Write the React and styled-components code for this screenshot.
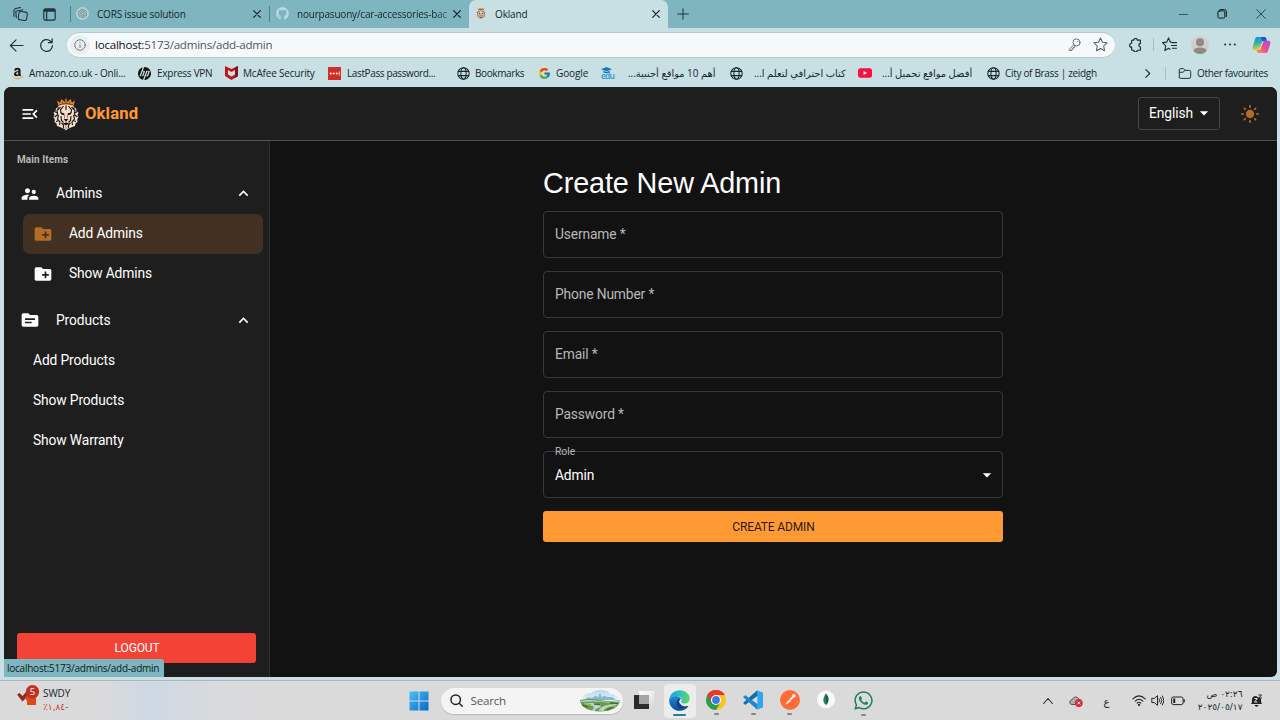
import React from 'react';
import styled, { createGlobalStyle } from 'styled-components';
import {
  MdMenuOpen, MdSupervisorAccount, MdCreateNewFolder, MdSource,
  MdKeyboardArrowUp, MdArrowDropDown, MdLightMode,
} from 'react-icons/md';
import { FaAmazon, FaGithub, FaWhatsapp } from 'react-icons/fa';
import { FcGoogle } from 'react-icons/fc';
import { SiOpenai, SiHp } from 'react-icons/si';

const Global = createGlobalStyle`
  * { box-sizing: border-box; }
  body { margin: 0; background: #c8dfe3; overflow: hidden; }
  svg { display: block; flex: none; }
`;

const ui = '"Open Sans", "DejaVu Sans", sans-serif';
const roboto = 'Roboto, sans-serif';

const Screen = styled.div`
  width: 1280px; height: 720px; display: flex; flex-direction: column;
  background: #c8dfe3; font-family: ${ui}; color: #15262b; overflow: hidden;
`;

/* ---------- browser chrome ---------- */
const TabBar = styled.div`
  height: 28px; flex: none; display: flex; align-items: stretch; background: #7eb5be; padding-left: 13px;
`;
const TabTools = styled.div`
  width: 57px; display: flex; align-items: center; gap: 15px;
`;
const Divider = styled.i`
  width: 1px; height: ${(p) => p.$h || 16}px; background: ${(p) => p.$c || '#4f7f88'}; align-self: center; flex: none;
`;
const Tab = styled.div`
  width: ${(p) => p.$w}px; display: flex; align-items: center; padding: 0 8px 1px ${(p) => p.$pl || 6}px;
  background: ${(p) => (p.$active ? '#c8dfe3' : 'transparent')};
  border-radius: 7px 7px 0 0;
`;
const TabTitle = styled.span`
  flex: 1; margin-left: 8px; font-size: 10px; line-height: 14px; white-space: nowrap;
  letter-spacing: ${(p) => p.$ls || 0}px;
  ${(p) => p.$fade && 'mask-image: linear-gradient(90deg, #000 88%, rgba(0,0,0,.3));'}
`;
const NewTab = styled.div` display: flex; align-items: center; padding: 0 0 1px 9px; flex: 1; `;
const WindowButtons = styled.div`
  display: flex; align-items: center; gap: 29px; padding-right: 14px;
`;
const Toolbar = styled.div`
  height: 34px; flex: none; display: flex; align-items: center; padding-left: 9px;
`;
const NavButtons = styled.div` width: 58px; display: flex; gap: 15px; `;
const AddressBar = styled.div`
  width: 1048px; height: 26px; border-radius: 13px; background: #f5f9fb; border: 1px solid #b5c8cc;
  border-width: 1px 0; display: flex; align-items: center; padding: 0 7px 1px 3px;
`;
const InfoDisc = styled.span`
  width: 20px; height: 20px; border-radius: 50%; background: #e9eef0; display: grid; place-items: center; margin-right: 5px;
`;
const Url = styled.span`
  flex: 1; font-size: 11.6px; letter-spacing: -0.25px; color: #50585b; white-space: nowrap;
  b { font-weight: 400; color: #111; }
`;
const AddressIcons = styled.div` display: flex; gap: 12px; align-items: center; `;
const ToolIcons = styled.div`
  flex: 1; display: flex; align-items: center; padding: 0 0 1px 14px;
`;
const Slot = styled.span` width: ${(p) => p.$w}px; display: flex; align-items: center; `;
const BookmarkBar = styled.div`
  height: 25px; flex: none; display: flex; align-items: center; padding: 0 0 3px 11px;
`;
const Bookmark = styled.div`
  width: ${(p) => p.$w}px; display: flex; align-items: center; flex: none;
`;
const BookmarkIcon = styled.span` width: ${(p) => p.$w || 18}px; flex: none; `;
const BookmarkText = styled.span`
  font-size: ${(p) => p.$fs || 10}px; line-height: 14px; white-space: nowrap; letter-spacing: ${(p) => p.$ls || 0}px;
`;

/* ---------- application ---------- */
const AppFrame = styled.div`
  height: 590px; flex: none; margin: 0 3px 0 4px; border-radius: 7px 7px 6px 0; overflow: hidden;
  display: flex; flex-direction: column; background: #121212; color: #fff; font-family: ${roboto};
  position: relative;
`;
const AppHeader = styled.header`
  height: 54px; flex: none; background: #1e1e1e; border-bottom: 1px solid #515151;
  display: flex; align-items: center; padding: 0 17px 0 16px;
`;
const Brand = styled.div`
  flex: 1; margin-left: 13px; display: flex; align-items: center; gap: 6px;
  color: #ff9933; font-size: 16.67px; font-weight: 700; letter-spacing: 0.12px;
`;
const LanguageSelect = styled.div`
  width: 82px; height: 33px; border: 1px solid #464646; border-radius: 3px; margin-right: 20px;
  display: flex; align-items: center; padding: 0 0 1px 10px; font-size: 13.8px; letter-spacing: -0.07px; gap: 1px;
`;
const AppBody = styled.div` flex: 1; display: flex; min-height: 0; `;
const Sidebar = styled.aside`
  width: 266px; background: #1e1e1e; border-right: 1px solid #333; display: flex; flex-direction: column;
`;
const Subheader = styled.div`
  height: 32.5px; padding: 12px 0 0 13px; font-size: 10px; line-height: 14px; font-weight: 700; color: #b8b8b8;
  letter-spacing: 0.08px;
`;
const SideRow = styled.div`
  height: 40px; display: flex; align-items: center; font-size: 13.8px; letter-spacing: -0.12px; line-height: 20px;
  padding-left: ${(p) => p.$pl}px; padding-right: 16px;
  margin: 0 ${(p) => (p.$nested ? 6 : 0)}px 0 ${(p) => (p.$nested ? 19.4 : 0)}px;
  border-radius: ${(p) => (p.$nested ? 7 : 0)}px;
  background: ${(p) => (p.$active ? '#423122' : 'transparent')};
  > svg:first-child { color: ${(p) => (p.$active ? '#b46d25' : '#fff')}; }
`;
const RowText = styled.span` flex: 1; margin-left: ${(p) => p.$ml || 0}px; padding-bottom: 1px; `;
const RowGap = styled.div` height: 6.7px; `;
const LogoutButton = styled.button`
  margin: auto 13px 14px; height: 30px; border: 0; border-radius: 3px; background: #f44336; color: #fff;
  font: 400 12px ${roboto}; letter-spacing: -0.15px; padding: 0 0 0 1px;
`;
const Main = styled.main` flex: 1; display: flex; justify-content: center; padding: 25px 1px 0 0; `;
const Form = styled.form` width: 460px; display: flex; flex-direction: column; gap: 13px; `;
const Title = styled.h4`
  margin: 0 0 -3px; height: 35px; font: 400 28.8px/35px "Liberation Sans", sans-serif; letter-spacing: -0.12px;
`;
const Field = styled.div`
  position: relative; height: 47px; border: 1px solid #383838; border-radius: 4px; padding: 0 5px 0 11px;
  display: flex; align-items: center; justify-content: space-between;
  font-size: 13.8px; letter-spacing: -0.14px; color: ${(p) => (p.$filled ? '#fff' : '#b8b8b8')};
`;
const FieldText = styled.span` padding-bottom: ${(p) => (p.$value ? 0 : 1)}px; line-height: 16px; `;
const FloatingLabel = styled.span`
  position: absolute; left: 11px; top: -7px; font-size: 10.3px; line-height: 14px; color: #b8b8b8; letter-spacing: 0;
`;
const SubmitButton = styled.button`
  height: 31px; border: 0; border-radius: 3px; background: #ff9933; color: rgba(0,0,0,.87);
  font: 400 12px ${roboto}; letter-spacing: -0.15px; padding: 0 0 0 1px;
`;
const StatusBubble = styled.div`
  position: absolute; left: -1px; bottom: 0; width: 161px; height: 18px; background: #7eb5be; color: #0d1a1d;
  border-radius: 0 3px 0 0; font: 10px/18px ${ui}; padding-left: 4px; letter-spacing: -0.24px; white-space: nowrap;
`;

/* ---------- taskbar ---------- */
const Taskbar = styled.footer`
  flex: 1; margin-top: 3px; border-top: 1px solid #aeb7bf; display: flex;
  background: linear-gradient(90deg, #dadadb 0, #dadadb 100px, #ced9e4 150px, #d8dadd 215px, #dadadb 260px);
`;
const Widget = styled.div`
  width: 408px; padding: 4px 0 0 16px; display: flex; gap: 2px;
`;
const WidgetText = styled.div`
  font-size: 10px; line-height: 15px; letter-spacing: -0.1px; padding-top: 1px;
  small { display: block; font: 9px/12px "DejaVu Sans", sans-serif; color: #c23a2c; direction: ltr; unicode-bidi: bidi-override; letter-spacing: -0.8px; }
`;
const Dock = styled.div` width: 480px; display: flex; align-items: center; padding-left: 0.5px; `;
const SearchBox = styled.div`
  width: 182px; height: 26px; border-radius: 13px; background: #f4f4f4; margin: 0 9px 0 12px;
  display: flex; align-items: center; padding: 0 3px 0 9px; box-shadow: 0 1px 1px #bbb;
  span { flex: 1; font-size: 11.6px; color: #585858; margin-left: 8px; letter-spacing: -0.2px; }
`;
const DockItem = styled.div`
  width: ${(p) => (p.$active ? 32 : 24)}px; height: 34px; margin-right: ${(p) => p.$mr || 0}px; border-radius: 4px;
  background: ${(p) => (p.$active ? '#ececec' : 'transparent')};
  display: flex; flex-direction: column; align-items: center; padding-top: 6px;
`;
const Running = styled.i`
  margin-top: 3px; width: ${(p) => (p.$active ? 13 : 5)}px; height: 2px; border-radius: 1px;
  background: ${(p) => (p.$active ? '#23808e' : '#858585')};
`;
const Tray = styled.div` flex: 1; display: flex; align-items: center; padding-left: 154.5px; `;
const Lang = styled.span` width: 28px; font: 10px "DejaVu Sans", sans-serif; padding-top: 1px; `;
const Clock = styled.div`
  width: 48px; margin-right: 7px; text-align: right; font: 9px/13px "DejaVu Sans", sans-serif; letter-spacing: -0.6px; white-space: nowrap;
  div { direction: rtl; text-align: right; }
  div + div { direction: ltr; unicode-bidi: bidi-override; }
`;

/* ---------- drawings ---------- */
const Line = ({ w = 16, h, box = '0 0 16 16', sw = 1, c = '#1c3036', children }) => (
  <svg width={w} height={h || w} viewBox={box} fill="none" stroke={c} strokeWidth={sw} strokeLinecap="round" strokeLinejoin="round">{children}</svg>
);
const Close = () => <Line w={8} box="0 0 8 8" sw={1.2} c="#142125"><path d="M.7.7l6.600 6.600M7.300.7L.7 7.300" /></Line>;
const Globe = () => (
  <Line w={13} sw={1.3} c="#17272b">
    <circle cx="8" cy="8" r="7" /><ellipse cx="8" cy="8" rx="3.200" ry="7" /><path d="M1.600 5.400h12.800M1.600 10.600h12.800" />
  </Line>
);
const Amazon = () => (
  <svg width="13" height="13" viewBox="0 0 512 512">
    <defs>
      <clipPath id="amzLetter"><path d="M0 0h512v365H0z" /></clipPath>
      <clipPath id="amzSmile"><path d="M0 365h512v147H0z" /></clipPath>
    </defs>
    <g clipPath="url(#amzLetter)"><FaAmazon size={512} color="#16130e" /></g>
    <g clipPath="url(#amzSmile)"><FaAmazon size={512} color="#f0962a" /></g>
  </svg>
);
const McAfee = () => (
  <svg width="13" height="14" viewBox="0 0 13 14"><path d="M0 0l6.500 3L13 0v10l-6.500 4L0 10z" fill="#c01818" /><path d="M3 4l3.500 2L10 4v4.600L6.500 10.500 3 8.600z" fill="#c8dfe3" /><path d="M10 1.400L13 0v10l-3 1.900z" fill="#7f1518" /></svg>
);
const LastPass = () => (
  <svg width="13" height="13" viewBox="0 0 13 13"><path d="M0 0h13v13H0z" fill="#d32d27" /><g fill="#fff"><circle cx="2.700" cy="6.500" r="1" /><circle cx="5.700" cy="6.500" r="1" /><circle cx="8.700" cy="6.500" r="1" /><path d="M10.800 4.500h.8v4h-.8z" /></g></svg>
);
const Edu = () => (
  <svg width="15" height="13" viewBox="0 0 15 13"><path d="M0 2.200L5.500 0 11 2.200 5.500 4.300zM2.300 3.700v1.700q3.200 1.500 6.400 0V3.700L5.500 5z" fill="#1678bf" /><text x="0" y="12.300" fontSize="8.500" fontFamily="Open Sans, sans-serif" fontWeight="600" fill="#2b94d1" textLength="14">edu</text></svg>
);
const YouTube = () => (
  <svg width="14" height="10" viewBox="0 0 14 10"><rect width="14" height="9.500" y=".2" rx="2.500" fill="#f4123f" /><path d="M5.500 2.900l3.500 2-3.500 2z" fill="#fff" /></svg>
);
const Copilot = () => (
  <svg width="19" height="18" viewBox="0 0 19 18">
    <defs>
      <linearGradient id="cpa" x1="0" y1="0" x2="0.300" y2="1"><stop offset="0" stopColor="#1c8df0" /><stop offset=".5" stopColor="#27b3a6" /><stop offset="1" stopColor="#f2cf2c" /></linearGradient>
      <linearGradient id="cpb" x1="1" y1="0" x2="0" y2="1"><stop offset="0" stopColor="#a44be8" /><stop offset=".5" stopColor="#ea4c92" /><stop offset="1" stopColor="#fc9a4b" /></linearGradient>
    </defs>
    <path d="M5.500 1h6.800c1 0 1.500.5 1.800 1.500l.7 2.300h-3c-1 0-1.600.5-1.900 1.500L8 12c-.4 1.400-1 2-2.300 2H2.500C.8 14 .2 12.600.8 10.700L3 3c.4-1.400 1.200-2 2.500-2z" fill="url(#cpa)" />
    <path d="M13.500 17H6.700c-1 0-1.500-.5-1.800-1.500l-.5-1.600H7c1 0 1.700-.6 2-1.600L10.900 6.500c.4-1.300 1-1.800 2.300-1.800h3.300c1.700 0 2.300 1.300 1.700 3.200L16 15c-.4 1.400-1.200 2-2.500 2z" fill="url(#cpb)" />
    <path d="M9 1h3.300c1 0 1.500.5 1.800 1.500l.7 2.300h-3c-.6 0-1.100.2-1.400.6z" fill="#2351c8" />
  </svg>
);
const Lion = ({ w = 26, h = 34 }) => (
  <svg width={w} height={h} viewBox="0 0 26 34">
    <path d="M4 3.500l3 2.200L8.500 2l3 3L13 .8l1.500 4.200 3-3L19 5.700l3-2.200-1.700 6H5.700z" fill="#e8862a" />
    <path d="M6.200 7.600q6.800-2 13.600 0M9 4.800l1 1.800M17 4.800l-1 1.800M13 3.500v2.500" fill="none" stroke="#4a2c12" strokeWidth=".8" />
    <path d="M3 11.500L6 9l4-1.200h6L20 9l3 2.500.5 2.500 2 1.500-1 2.500 1 2-1.300 2.500.3 2.500-2 1.500-.5 2.500-2.500.8L17 31l-2 .5-2 2-2-2-2-.5-2.500-1.200L4 29l-.5-2.500L1.500 25l.3-2.500L.5 20l1-2-1-2.500 2-1.500z" fill="#f6dfcb" />
    <g fill="none" stroke="#1e1a18" strokeWidth="1.150">
      <path d="M7.500 10l-3.500 3.500.7 4-3 2.500M5.500 18l-1 4 2.500 3-.5 3M18.500 10l3.500 3.500-.7 4 3 2.500M20.500 18l1 4-2.500 3 .5 3M10.500 9l-3 4 .5 3M15.500 9l3 4-.5 3M13 8.500V13" />
      <path d="M1.500 14.500l3 1.500M24.500 14.500l-3 1.500M3 24.500l3-1M23 24.500l-3-1M8 19l.5 4.500 2 2M18 19l-.5 4.500-2 2M8.500 26l2 2v3M17.500 26l-2 2v3M6 12L4.500 10.500M20 12l1.500-1.500" />
    </g>
    <path d="M7.500 15.300l4 1.300-.6 1.600-2.900-.9zM18.500 15.300l-4 1.300.6 1.600 2.900-.9zM10.600 22h4.800L13 24.700zM9.800 26.600l3.200-1.100 3.200 1.100-3.200 1.800z" fill="#161312" />
    <path d="M11.600 17.500v4M14.400 17.500v4M13 24.500v1.500M13 29v3" stroke="#70584a" strokeWidth=".7" />
  </svg>
);
const Windows = () => (
  <svg width="20" height="20" viewBox="0 0 20 20"><defs><linearGradient id="win" x1="0" y1="0" x2="1" y2="1"><stop offset="0" stopColor="#4cc0f5" /><stop offset="1" stopColor="#0669c7" /></linearGradient></defs><path d="M.5.500h9v9h-9zM10.500.5h9v9h-9zM.5 10.500h9v9h-9zM10.500 10.500h9v9h-9z" fill="url(#win)" /></svg>
);
const SearchArt = () => (
  <svg width="40" height="22" viewBox="0 0 40 22">
    <defs>
      <linearGradient id="sky" x1="0" y1="0" x2="0" y2="1"><stop offset="0" stopColor="#b7d7ee" /><stop offset="1" stopColor="#e6f1f2" /></linearGradient>
      <clipPath id="land"><path d="M0 10q10-2 20 0t20 0c0 7-9 11.500-20 11.500S0 17 0 10z" /></clipPath>
    </defs>
    <path d="M1 10C2 6 6 3 11 3c2-2 5-3 9-3 6 0 8 1 10 4 5 0 8 3 9 6z" fill="url(#sky)" />
    <path d="M4 10l4-3 4 1 3-2 4 1V4h2v3l3-1 4 1 4 0 4 3z" fill="#86b9cf" />
    <g clipPath="url(#land)">
      <path d="M0 8h40v14H0z" fill="#6f9c45" />
      <path d="M0 11q9-2 20 0t20-1v2q-10 1-17 0T0 12z" fill="#a9d2df" />
      <path d="M3 14q6-1 9 1t1 4l-2 3h4q-1-3 3-4t2-3-8-2-9 1zM24 22q-1-3 4-4.500t10-3q-2-1-8 0t-9 3-1 4.500z" fill="#b4d6dc" />
      <path d="M2 15l6 2M27 20l7-4M14 14l6 .5M30 13l8 .5" stroke="#466f2a" strokeWidth="1.500" />
      <path d="M4 13.500l9 2.500M27 17l9-1M19 20h3" stroke="#a9c552" strokeWidth="1" />
    </g>
  </svg>
);
const TaskView = () => (
  <svg width="20" height="20" viewBox="0 0 20 20"><defs><linearGradient id="tv" x1="0" y1="0" x2="1" y2="1"><stop offset="0" stopColor="#fff" /><stop offset="1" stopColor="#dedede" /></linearGradient></defs><path d="M5 1h15v13H5z" fill="url(#tv)" /><path d="M0 5h5v9h10v5H0z" fill="#2a2a2a" /><path d="M5 5h10v9H5z" fill="#a5a5a5" /></svg>
);
const Edge = () => (
  <svg width="21" height="21" viewBox="0 0 21 21">
    <defs>
      <linearGradient id="ea" x1="0" y1="0" x2="1" y2="0"><stop offset="0" stopColor="#209fe0" /><stop offset=".55" stopColor="#2fc3bd" /><stop offset="1" stopColor="#68d850" /></linearGradient>
      <linearGradient id="eb" x1="0" y1="0" x2="0" y2="1"><stop offset="0" stopColor="#1a8edc" /><stop offset="1" stopColor="#0e4796" /></linearGradient>
    </defs>
    <path d="M.3 9.500C1 4 5.300.3 10.700.3 16.500.3 20.700 4 20.700 8.500c0 3.300-2.500 5.200-5.400 5.200-2.400 0-3.500-.8-3-1.800 1.800-2.600-.2-6-4.600-6C4 5.900 1.300 7.200.3 9.500z" fill="url(#ea)" />
    <path d="M.3 9.500c1.500-3.500 9-5 11.600-1.200-4 .2-5.400 4.200-3.600 7.300 2.200 3.500 7 4.400 10.800 1.200-2 2.800-5 4-8.300 4C4.200 20.800-.4 15.500.3 9.500z" fill="url(#eb)" />
    <path d="M11.900 8.300c-4 .2-5.800 4.200-4 7.300 2.500 4.200 7.300 4.500 11.200 1.200.6-.8-.2-1-1-.7-3.600 1.200-7.300-1-6.500-3.300.9-1.500 1.500-2.700.3-4.500z" fill="#123f83" />
    <path d="M12.200 8.800c1 1.300.5 2.300 0 3.200-.6 1.300 1.600 2 4 1.600-2 1.500-5.500.9-6-1.300-.3-1.300.6-2.900 2-3.500z" fill="#e9f3f4" />
  </svg>
);
const Chrome = () => (
  <svg width="20" height="20" viewBox="0 0 20 20">
    <path d="M10 10L1.340 5A10 10 0 0118.660 5z" fill="#e33b2e" />
    <path d="M10 10V5h8.660A10 10 0 0110 20z" fill="#fcc31e" />
    <path d="M10 10l4.300 2.500L10 20A10 10 0 011.340 5z" fill="#2a9d4b" />
    <path d="M1.340 5L5.700 12.500 10 10V5h8.660A10 10 0 001.340 5z" fill="#e33b2e" />
    <circle cx="10" cy="10" r="5" fill="#fff" /><circle cx="10" cy="10" r="3.900" fill="#3a7bea" />
  </svg>
);
const VsCode = () => (
  <svg width="20" height="20" viewBox="0 0 20 20">
    <path d="M14.300.200L.500 12.600q-.5.500 0 1l1.200 1q.5.400 1 0L15 5.500z" fill="#0f6cb0" />
    <path d="M14.300 19.800L.5 7.400q-.5-.5 0-1l1.200-1q.5-.4 1 0L15 14.500z" fill="#1f86c9" />
    <path d="M14.300.200L20 2.800v14.400l-5.700 2.600z" fill="#2fa6ee" />
  </svg>
);
const Postman = () => (
  <svg width="20" height="20" viewBox="0 0 20 20"><circle cx="10" cy="10" r="10" fill="#ff6c37" /><path d="M5 14.800l4-5.300 2 1.800zM9.600 8.800l3-2.600 1 1.100-2.700 2.900z" fill="#fff" /><circle cx="14" cy="5.700" r="1.700" fill="#fff" /></svg>
);
const Mongo = () => (
  <svg width="20" height="20" viewBox="0 0 20 20"><circle cx="10" cy="9.500" r="9" fill="#fafafa" /><path d="M10 3.500c4 4.500 3 9 0 11.500v1.500z" fill="#116149" /><path d="M10 3.500C6 8.500 7 13 10 15z" fill="#2d7d52" /></svg>
);

const FIELDS = ['Username *', 'Phone Number *', 'Email *', 'Password *'];

const BOOKMARKS = [
  { w: 127, icon: <Amazon />, iw: 18, text: 'Amazon.co.uk - Onli...', ls: -0.19 },
  { w: 87, icon: <SiHp size={13} color="#111" />, iw: 19, text: 'Express VPN', ls: -0.26 },
  { w: 103, icon: <McAfee />, iw: 18, text: 'McAfee Security', ls: -0.19 },
  { w: 129, icon: <LastPass />, iw: 19, text: 'LastPass password...', ls: -0.38 },
  { w: 81, icon: <Globe />, iw: 18, text: 'Bookmarks', ls: -0.38 },
  { w: 63, icon: <FcGoogle size={13} />, iw: 18, text: 'Google', ls: -0.1 },
  { w: 129, icon: <Edu />, iw: 27, text: 'أهم 10 مواقع أجنبية...', rtl: true },
  { w: 128, icon: <Globe />, iw: 24, text: 'كتاب احترافي لتعلم ا...', rtl: true },
  { w: 129, icon: <YouTube />, iw: 24, text: 'أفضل مواقع تحميل أ...', rtl: true },
  { w: 156, icon: <Globe />, iw: 18, text: 'City of Brass | zeidgh', ls: -0.32 },
];

export default function App() {
  return (
    <Screen>
      <Global />
      <TabBar>
        <TabTools>
          <Line w={15} sw={1.1}><rect x="6" y="5" width="9" height="9" rx="2" transform="rotate(8 10 9)" /><path d="M3.500 11.500l-.5-7L10.500 3M1 10V3.500Q1 2 3 1.500l5-1" /></Line>
          <Line w={13} sw={1.4}><rect x="1" y="1" width="14" height="14" rx="2" /><path d="M1 3h14" strokeWidth="3" strokeLinecap="butt" /><path d="M4.500 4v11" /></Line>
        </TabTools>
        <Divider />
        <Tab $w={198} $pl={5}><svg width="13" height="13" viewBox="0 0 13 13"><circle cx="6.500" cy="6.500" r="6.500" fill="#b8ced3" /><SiOpenai x="2" y="2" size={9} color="#5e7f88" /></svg><TabTitle $ls={-0.2}>CORS issue solution</TabTitle><Close /></Tab>
        <Divider />
        <Tab $w={199} $pl={6}><FaGithub size={13} color="#b9dbe2" /><TabTitle $fade $ls={-0.2}>nourpasuony/car-accessories-bac</TabTitle><Close /></Tab>
        <Tab $w={199} $pl={6} $active><Lion w={12} h={13} /><TabTitle $ls={-0.15}>Okland</TabTitle><Close /></Tab>
        <NewTab><Line w={12} sw={1.3}><path d="M8 1v14M1 8h14" /></Line></NewTab>
        <WindowButtons>
          <Line w={9} sw={1.3}><path d="M0 8h16" /></Line>
          <Line w={10} sw={1.6} c="#0e181a"><rect x="1.500" y="3" width="11" height="11.500" rx="2" /><path d="M5 1h7q3 0 3 3v8" /></Line>
          <Line w={10} sw={1.3}><path d="M1 1l14 14M15 1L1 15" /></Line>
        </WindowButtons>
      </TabBar>
      <Toolbar>
        <NavButtons>
          <Line w={15} sw={1.2}><path d="M15 8H1.500M7.500 2l-6 6 6 6" /></Line>
          <Line w={15} sw={1.3}><path d="M14.300 8a6.300 6.300 0 11-2-4.600L14 5M14 1v4h-4" /></Line>
        </NavButtons>
        <AddressBar>
          <InfoDisc><Line w={12} c="#60696c" sw={1.1}><circle cx="8" cy="8" r="7" /><path d="M8 7.500v4M8 4.500v.2" /></Line></InfoDisc>
          <Url><b>localhost:</b>5173/admins/add-admin</Url>
          <AddressIcons>
            <Line w={13} sw={1.1} c="#566165"><circle cx="10.500" cy="5.500" r="4.400" /><path d="M7 8.500L1.500 14v1.500h3V14H6v-2h2l.5-2M11.500 4.300v.2" /></Line>
            <Line w={15} sw={1.1} c="#566165"><path d="M8 1l2.100 4.600 4.900.6-3.600 3.400.9 5L8 12.200l-4.300 2.400.9-5L1 6.200l4.900-.6z" /></Line>
          </AddressIcons>
        </AddressBar>
        <ToolIcons>
          <Slot $w={24}><Line w={14} sw={1.4}><path d="M5.500 2.500a2 2 0 014 0H13V6.500a1.800 1.800 0 000 3.600V14H9.500a2 2 0 01-4 0H4Q3 14 3 13v-2.500a2.200 2.200 0 010-4.500V3.500q0-1 1-1z" /></Line></Slot>
          <Slot $w={9}><Divider $h={13} $c="#a5bfc4" /></Slot>
          <Slot $w={29}><Line w={15} sw={1.2}><path d="M10 5.500H9L7 1 5 5.500l-4.500.5L4 9.500l-1 5 4-2.500 1.500 1M11 6h4.500M10 9h5.500M11 12h4.500" /></Line></Slot>
          <Slot $w={33}>
            <svg width="18" height="18" viewBox="0 0 18 18"><circle cx="9" cy="9" r="9" fill="#d3cdca" /><circle cx="9" cy="6.300" r="4" fill="#8e8886" /><path d="M2.500 15q0-3.500 6.500-3.500t6.500 3.500Q13 18 9 18t-6.500-3z" fill="#8e8886" /></svg>
          </Slot>
          <Slot $w={28}><svg width="12" height="3" viewBox="0 0 12 3" fill="#15262b"><circle cx="1.200" cy="1.500" r="1" /><circle cx="6" cy="1.500" r="1" /><circle cx="10.800" cy="1.500" r="1" /></svg></Slot>
          <Copilot />
        </ToolIcons>
      </Toolbar>
      <BookmarkBar>
        {BOOKMARKS.map((b, i) => (
          <Bookmark key={i} $w={b.w}>
            <BookmarkIcon $w={b.iw}>{b.icon}</BookmarkIcon>
            <BookmarkText $ls={b.ls} $fs={b.rtl ? 9.9 : 10} dir={b.rtl ? 'rtl' : 'ltr'}>{b.text}</BookmarkText>
          </Bookmark>
        ))}
        <Slot $w={22}><Line w={9} sw={2}><path d="M5 1l7 7-7 7" /></Line></Slot>
        <Slot $w={13}><Divider $h={13} $c="#a5bfc4" /></Slot>
        <Bookmark $w={95}>
          <BookmarkIcon $w={19}><Line w={14} h={13} sw={1.2}><path d="M1 13V3.500Q1 2 2.500 2H6l2 2.200h5.500Q15 4.200 15 5.700V12q0 2-2 2H2.500Q1 14 1 13zM1 6.500h4.500L8 4.200" /></Line></BookmarkIcon>
          <BookmarkText $ls={-0.34}>Other favourites</BookmarkText>
        </Bookmark>
      </BookmarkBar>

      <AppFrame>
        <AppHeader>
          <MdMenuOpen size={20} />
          <Brand><Lion />Okland</Brand>
          <LanguageSelect>English<MdArrowDropDown size={20} /></LanguageSelect>
          <MdLightMode size={20} color="#b46d25" />
        </AppHeader>
        <AppBody>
          <Sidebar>
            <Subheader>Main Items</Subheader>
            <SideRow $pl={15.5}><MdSupervisorAccount size={20} /><RowText $ml={16.5}>Admins</RowText><MdKeyboardArrowUp size={19} /></SideRow>
            <SideRow $pl={9.5} $nested $active><MdCreateNewFolder size={20} /><RowText $ml={16}>Add Admins</RowText></SideRow>
            <SideRow $pl={9.5} $nested><MdCreateNewFolder size={20} /><RowText $ml={16}>Show Admins</RowText></SideRow>
            <RowGap />
            <SideRow $pl={15.5}><MdSource size={20} /><RowText $ml={16.5}>Products</RowText><MdKeyboardArrowUp size={19} /></SideRow>
            <SideRow $pl={29}><RowText>Add Products</RowText></SideRow>
            <SideRow $pl={29}><RowText>Show Products</RowText></SideRow>
            <SideRow $pl={29}><RowText>Show Warranty</RowText></SideRow>
            <LogoutButton type="button">LOGOUT</LogoutButton>
          </Sidebar>
          <Main>
            <Form>
              <Title>Create New Admin</Title>
              {FIELDS.map((f) => <Field key={f}><FieldText>{f}</FieldText></Field>)}
              <Field $filled><FloatingLabel>Role</FloatingLabel><FieldText $value>Admin</FieldText><MdArrowDropDown size={20} /></Field>
              <SubmitButton type="button">CREATE ADMIN</SubmitButton>
            </Form>
          </Main>
        </AppBody>
        <StatusBubble>localhost:5173/admins/add-admin</StatusBubble>
      </AppFrame>

      <Taskbar>
        <Widget>
          <svg width="25" height="24" viewBox="0 0 25 24">
            <path d="M1 9.500l2.500-1.500 3 3L10 7l3 3-6.500 6.500z" fill="#8c2d20" />
            <path d="M9 13l2-3h9v10H11v-4z" fill="#dd4a13" />
            <circle cx="16.500" cy="6.800" r="6.700" fill="#c42f24" />
            <text x="16.500" y="10.300" fontSize="9.500" fontFamily="Open Sans, sans-serif" textAnchor="middle" fill="#fff">5</text>
          </svg>
          <WidgetText>SWDY<small>٪١,٨٤-</small></WidgetText>
        </Widget>
        <Dock>
          <Windows />
          <SearchBox><Line w={13} sw={1.8} c="#222"><circle cx="7" cy="7" r="5.800" /><path d="M11.300 11.300L15 15" /></Line><span>Search</span><SearchArt /></SearchBox>
          <DockItem $mr={8}><TaskView /></DockItem>
          <DockItem $active $mr={8.500}><Edge /><Running $active /></DockItem>
          <DockItem $mr={13}><Chrome /><Running /></DockItem>
          <DockItem $mr={12.500}><VsCode /><Running /></DockItem>
          <DockItem $mr={12.500}><Postman /><Running /></DockItem>
          <DockItem $mr={13}><Mongo /></DockItem>
          <DockItem><FaWhatsapp size={21} color="#218058" /><Running /></DockItem>
        </Dock>
        <Tray>
          <Slot $w={26}><Line w={10} sw={1.8}><path d="M1 12l7-8 7 8" /></Line></Slot>
          <Slot $w={35}><svg width="14" height="12" viewBox="0 0 14 12"><path d="M3 9.500C-.5 9 .3 5 3 4.800 4.500 1 9 1.500 10 4l-3 5.500z" fill="#a9adad" stroke="#555" /><circle cx="9.800" cy="8" r="3.900" fill="#db2730" /><path d="M8.400 6.600l2.800 2.800M11.200 6.600L8.400 9.400" stroke="#fff" /></svg></Slot>
          <Lang>ع</Lang>
          <Slot $w={19}><Line w={14} h={13} sw={1.300} c="#222"><path d="M.5 6q7.500-7.500 15 0M3.300 8.700q4.700-4.500 9.400 0M5.700 11.200q2.300-2 4.600 0" /><circle cx="8" cy="13.500" r=".7" /></Line></Slot>
          <Slot $w={20}><Line w={13} h={13} sw={1.200} c="#222"><path d="M1 5.500v5h3l4 3.500V2L4 5.500zM10 6q1.500 2 0 4M12 4q3 4 0 8M14 2.500q3.500 5.500 0 11" /></Line></Slot>
          <Slot $w={24}><svg width="14" height="10" viewBox="0 0 14 10"><rect x=".6" y="1" width="11.500" height="7.600" rx="1.800" fill="none" stroke="#222" /><path d="M2.200 2.600h2v4.400h-2zM12.600 3.300h1.200v3h-1.200z" fill="#222" /></svg></Slot>
          <Clock><div>٠٢:٢٦ ص</div><div>٢٠٢٥/٠٥/١٧</div></Clock>
          <svg width="13" height="13" viewBox="0 0 13 13"><path d="M1 10q1-1 1-3V5.500Q2 2 6 2l5 3v2q0 2 1 3zM4.500 11h4Q8 12.700 6.500 12.700T4.500 11z" fill="#222" /><path d="M4.300 4.500h3L4.500 8h3" fill="none" stroke="#ddd" /><path d="M8.500 1h3L9 4h3" fill="none" stroke="#222" /></svg>
        </Tray>
      </Taskbar>
    </Screen>
  );
}
